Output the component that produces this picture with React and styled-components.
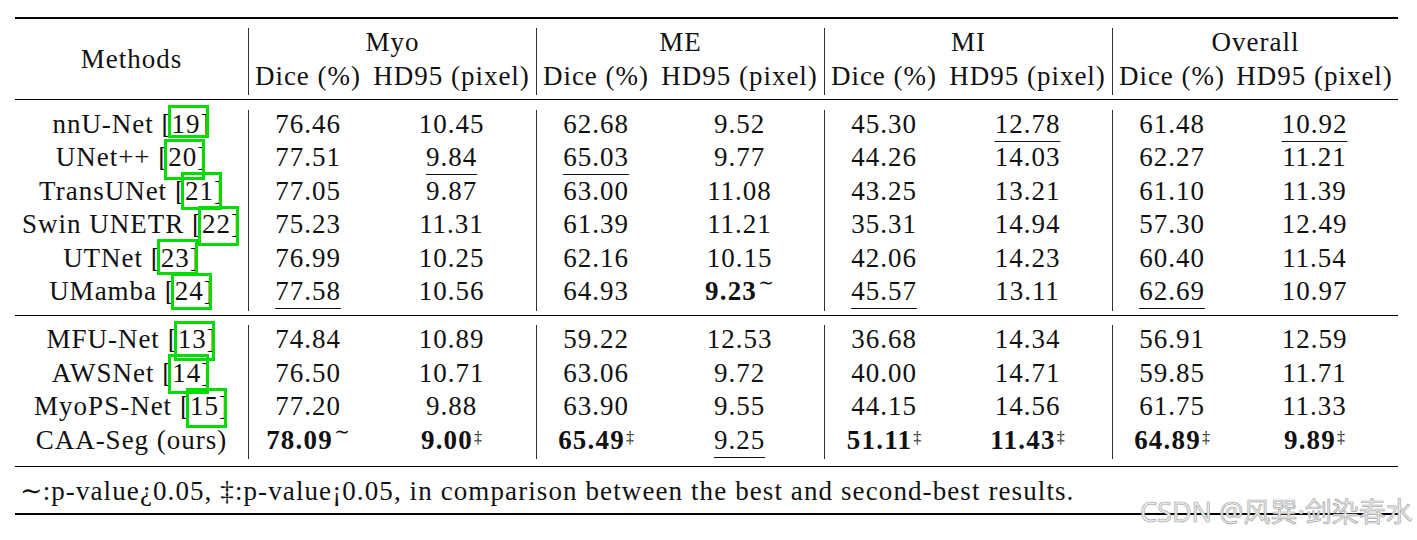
import React from "react";
import styled, { createGlobalStyle } from "styled-components";

const GlobalStyle = createGlobalStyle`
  html, body {
    margin: 0;
    padding: 0;
    background: #fff;
  }
  body {
    font-family: "Liberation Serif", "Times New Roman", serif;
    color: #111;
  }
`;

const Page = styled.div`
  position: relative;
  width: 1417px;
  height: 540px;
  padding: 16.7px 0 0 15px;
  box-sizing: border-box;
  overflow: hidden;
`;

const Table = styled.div`
  width: 1383px;
  font-size: 27px;
  letter-spacing: 1px;
`;

const Rule = styled.div`
  height: ${(p) => (p.$thick ? "2px" : "1px")};
  background: #000;
`;

const Section = styled.div`
  padding: ${(p) => p.$pt}px 0 ${(p) => p.$pb}px;
`;

const Grid = styled.div`
  display: grid;
  grid-template-columns: 233px 119px 169px 119px 169px 119px 169px 119px 167px;
  grid-auto-rows: 33.5px;
`;

const Cell = styled.div`
  line-height: 29px;
  text-align: center;
  white-space: nowrap;
  border-left: ${(p) => (p.$divider ? "1px solid #333" : "none")};
  grid-column: ${(p) => (p.$span ? `span ${p.$span}` : "auto")};
`;

const MethodsHead = styled.div`
  grid-row: span 2;
  display: flex;
  align-items: center;
  justify-content: center;
  line-height: 29px;
  padding-bottom: 4px;
`;

const CiteNum = styled.span`
  position: relative;

  &::after {
    content: "";
    position: absolute;
    left: -4px;
    right: -8px;
    top: -3.5px;
    height: ${(p) => p.$h}px;
    border: 3px solid #00dc00;
    box-sizing: border-box;
  }
`;

const Under = styled.span`
  text-decoration: underline;
  text-decoration-thickness: 1px;
  text-underline-offset: 8px;
`;

const Bold = styled.span`
  font-weight: 700;
  letter-spacing: 1.2px;
`;

const Sup = styled.span`
  font-family: "Liberation Serif", "DejaVu Serif", serif;
  font-size: ${(p) => (p.$sim ? "19px" : "16px")};
  font-weight: 400;
  letter-spacing: 0;
  line-height: 0;
  vertical-align: ${(p) => (p.$sim ? "11px" : "6px")};
  margin-left: 1px;
`;

const FootNote = styled.div`
  height: 33.5px;
  line-height: 29px;
  padding-left: 5px;
  white-space: nowrap;
  letter-spacing: 1.1px;
`;

const Sim = styled.span`
  font-family: "DejaVu Serif", serif;
  letter-spacing: 0;
`;

const Watermark = styled.div`
  position: absolute;
  left: 1140px;
  top: 496px;
  font-family: "Noto Sans", "Noto Sans CJK SC", sans-serif;
  font-size: 27px;
  line-height: 32px;
  color: #ececec;
  -webkit-text-stroke: 0.7px #a9a9a9;
  white-space: nowrap;
`;

const u = (t) => ({ t, u: true });
const b = (t, m) => ({ t, b: true, m });

const groups = ["Myo", "ME", "MI", "Overall"];

const baselines = [
  { name: "nnU-Net", cite: "19", h: 33, vals: ["76.46", "10.45", "62.68", "9.52", "45.30", u("12.78"), "61.48", u("10.92")] },
  { name: "UNet++", cite: "20", h: 41, vals: ["77.51", u("9.84"), u("65.03"), "9.77", "44.26", "14.03", "62.27", "11.21"] },
  { name: "TransUNet", cite: "21", h: 38, vals: ["77.05", "9.87", "63.00", "11.08", "43.25", "13.21", "61.10", "11.39"] },
  { name: "Swin UNETR", cite: "22", h: 40, vals: ["75.23", "11.31", "61.39", "11.21", "35.31", "14.94", "57.30", "12.49"] },
  { name: "UTNet", cite: "23", h: 36, vals: ["76.99", "10.25", "62.16", "10.15", "42.06", "14.23", "60.40", "11.54"] },
  { name: "UMamba", cite: "24", h: 37, vals: [u("77.58"), "10.56", "64.93", b("9.23", "∼"), u("45.57"), "13.11", u("62.69"), "10.97"] },
];

const cardiac = [
  { name: "MFU-Net", cite: "13", h: 40, vals: ["74.84", "10.89", "59.22", "12.53", "36.68", "14.34", "56.91", "12.59"] },
  { name: "AWSNet", cite: "14", h: 40, vals: ["76.50", "10.71", "63.06", "9.72", "40.00", "14.71", "59.85", "11.71"] },
  { name: "MyoPS-Net", cite: "15", h: 40, vals: ["77.20", "9.88", "63.90", "9.55", "44.15", "14.56", "61.75", "11.33"] },
  {
    name: "CAA-Seg (ours)",
    vals: [b("78.09", "∼"), b("9.00", "‡"), b("65.49", "‡"), u("9.25"), b("51.11", "‡"), b("11.43", "‡"), b("64.89", "‡"), b("9.89", "‡")],
  },
];

const Value = ({ v }) => {
  if (typeof v === "string") return v;
  if (v.u) return <Under>{v.t}</Under>;
  return (
    <>
      <Bold>{v.t}</Bold>
      <Sup $sim={v.m === "∼"}>{v.m}</Sup>
    </>
  );
};

const Rows = ({ rows }) =>
  rows.map((r) => (
    <React.Fragment key={r.name}>
      <Cell>
        {r.name}
        {r.cite && (
          <>
            {" ["}
            <CiteNum $h={r.h}>{r.cite}</CiteNum>]
          </>
        )}
      </Cell>
      {r.vals.map((v, i) => (
        <Cell key={i} $divider={i % 2 === 0}>
          <Value v={v} />
        </Cell>
      ))}
    </React.Fragment>
  ));

export default function App() {
  return (
    <Page>
      <GlobalStyle />
      <Table>
        <Rule $thick />
        <Section $pt={9.8} $pb={3.8}>
          <Grid>
            <MethodsHead>Methods</MethodsHead>
            {groups.map((g) => (
              <Cell key={g} $span={2} $divider>
                {g}
              </Cell>
            ))}
            {groups.map((g) => (
              <React.Fragment key={g}>
                <Cell $divider>Dice (%)</Cell>
                <Cell>HD95 (pixel)</Cell>
              </React.Fragment>
            ))}
          </Grid>
        </Section>
        <Rule />
        <Section $pt={9.4} $pb={4.8}>
          <Grid>
            <Rows rows={baselines} />
          </Grid>
        </Section>
        <Rule />
        <Section $pt={9} $pb={6.5}>
          <Grid>
            <Rows rows={cardiac} />
          </Grid>
        </Section>
        <Rule />
        <Section $pt={9} $pb={3.5}>
          <FootNote>
            <Sim>∼</Sim>:p-value¿0.05, ‡:p-value¡0.05, in comparison between the best and second-best results.
          </FootNote>
        </Section>
        <Rule $thick />
      </Table>
      <Watermark>CSDN @风巽·剑染春水</Watermark>
    </Page>
  );
}
